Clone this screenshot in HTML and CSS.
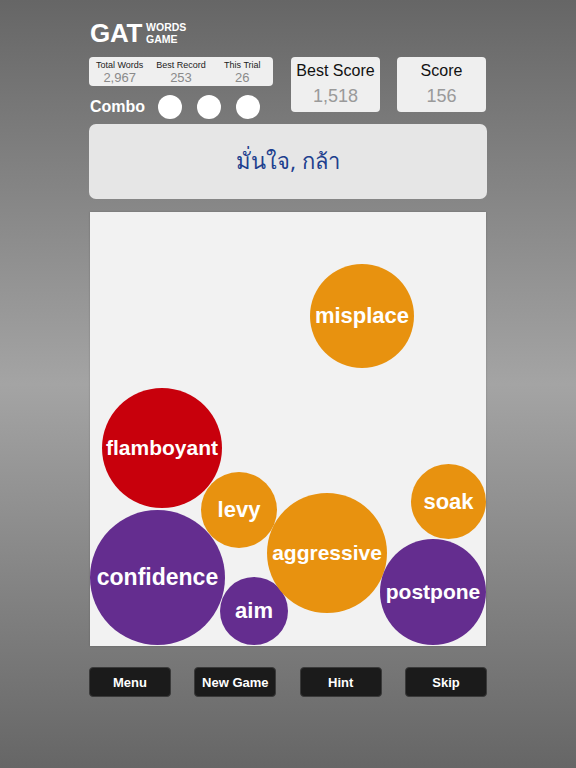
FILE: index.html
```html
<!DOCTYPE html>
<html>
<head>
<meta charset="utf-8">
<link rel="stylesheet" href="styles.css">
</head>
<body>
<div class="app">
  <div class="logo">
    <span class="gat">GAT</span>
    <span class="sub">WORDS<br>GAME</span>
  </div>
  <div class="top">
    <div class="left">
      <div class="stats">
        <div class="stat"><div class="lbl">Total Words</div><div class="val">2,967</div></div>
        <div class="stat"><div class="lbl">Best Record</div><div class="val">253</div></div>
        <div class="stat"><div class="lbl">This Trial</div><div class="val">26</div></div>
      </div>
      <div class="combo">
        <span class="combo-label">Combo</span>
        <span class="dots"><span class="dot"></span><span class="dot"></span><span class="dot"></span></span>
      </div>
    </div>
    <div class="scorebox best"><div class="slbl">Best Score</div><div class="sval">1,518</div></div>
    <div class="scorebox"><div class="slbl">Score</div><div class="sval">156</div></div>
  </div>
  <div class="meaning">มั่นใจ, กล้า</div>
  <div class="board">
    <div class="bubble orange b-misplace">misplace</div>
    <div class="bubble red b-flamboyant">flamboyant</div>
    <div class="bubble orange b-levy">levy</div>
    <div class="bubble purple b-confidence">confidence</div>
    <div class="bubble purple b-aim">aim</div>
    <div class="bubble orange b-aggressive">aggressive</div>
    <div class="bubble orange b-soak">soak</div>
    <div class="bubble purple b-postpone">postpone</div>
  </div>
  <div class="buttons">
    <div class="btn">Menu</div>
    <div class="btn">New Game</div>
    <div class="btn">Hint</div>
    <div class="btn">Skip</div>
  </div>
</div>
</body>
</html>
```
FILE: styles.css
```css
html, body {
  margin: 0;
  padding: 0;
  height: 768px;
  overflow: hidden;
}
body {
  background: linear-gradient(to bottom, #666666 0%, #a4a4a4 50%, #666666 100%);
  font-family: "Liberation Sans", Arial, sans-serif;
}
.app {
  width: 398px;
  margin-left: 89px;
  padding-top: 20px;
}
.logo {
  display: flex;
  align-items: flex-start;
  height: 37px;
  color: #fff;
  font-weight: bold;
}
.gat {
  font-size: 26px;
  line-height: 26px;
  letter-spacing: -0.3px;
  margin-left: 1px;
}
.sub {
  font-size: 10.5px;
  line-height: 12px;
  margin-left: 4px;
  margin-top: 1px;
}
.top {
  display: flex;
  align-items: flex-start;
}
.left {
  width: 184px;
  margin-right: 18px;
}
.stats {
  display: flex;
  background: #efefef;
  border-radius: 4px;
  height: 29px;
  box-sizing: border-box;
  padding-top: 3px;
}
.stat {
  flex: 1;
  text-align: center;
}
.lbl {
  font-size: 9px;
  line-height: 11px;
  color: #222;
}
.val {
  font-size: 13px;
  line-height: 14px;
  color: #8a8a8a;
}
.combo {
  display: flex;
  align-items: center;
  height: 24px;
  margin-top: 9px;
}
.combo-label {
  color: #fff;
  font-weight: bold;
  font-size: 16px;
  margin-left: 1px;
  width: 68px;
}
.dots {
  display: flex;
  gap: 15px;
}
.dot {
  width: 24px;
  height: 24px;
  border-radius: 50%;
  background: #fff;
}
.scorebox {
  width: 89px;
  height: 55px;
  box-sizing: border-box;
  background: #efefef;
  border-radius: 4px;
  text-align: center;
  padding-top: 5px;
}
.scorebox.best {
  margin-right: 17px;
}
.slbl {
  font-size: 16px;
  line-height: 18px;
  color: #111;
}
.sval {
  font-size: 18px;
  line-height: 20px;
  margin-top: 6px;
  color: #9a9a9a;
}
.meaning {
  margin-top: 5px;
  height: 75px;
  background: #e6e6e6;
  border-radius: 7px;
  display: flex;
  align-items: center;
  justify-content: center;
  font-family: "Noto Sans", "DejaVu Sans", sans-serif;
  font-size: 22px;
  color: #1d3f8e;
}
.board {
  position: relative;
  margin-top: 13px;
  margin-left: 1px;
  width: 396px;
  height: 434px;
  background: #f2f2f2;
  box-shadow: 0 0 2px rgba(0, 0, 0, 0.2);
}
.bubble {
  position: absolute;
  border-radius: 50%;
  display: flex;
  align-items: center;
  justify-content: center;
  color: #fff;
  font-weight: bold;
  font-size: 22px;
}
.orange { background: #e8920f; }
.purple { background: #642d8f; }
.red { background: #c8000c; }
.b-misplace { left: 220px; top: 52px; width: 104px; height: 104px; }
.b-flamboyant { left: 12px; top: 176px; width: 120px; height: 120px; font-size: 21px; }
.b-levy { left: 111px; top: 260px; width: 76px; height: 76px; }
.b-confidence { left: 0; top: 298px; width: 135px; height: 135px; font-size: 23px; }
.b-aim { left: 130px; top: 365px; width: 68px; height: 68px; }
.b-aggressive { left: 177px; top: 281px; width: 120px; height: 120px; font-size: 21px; }
.b-soak { left: 321px; top: 252px; width: 75px; height: 75px; }
.b-postpone { left: 290px; top: 327px; width: 106px; height: 106px; font-size: 21px; }
.buttons {
  display: flex;
  justify-content: space-between;
  margin-top: 21px;
}
.btn {
  width: 82px;
  height: 30px;
  box-sizing: border-box;
  background: #1b1b1b;
  border: 1px solid #3a3a3a;
  border-radius: 4px;
  color: #fff;
  font-weight: bold;
  font-size: 13px;
  display: flex;
  align-items: center;
  justify-content: center;
}
```
